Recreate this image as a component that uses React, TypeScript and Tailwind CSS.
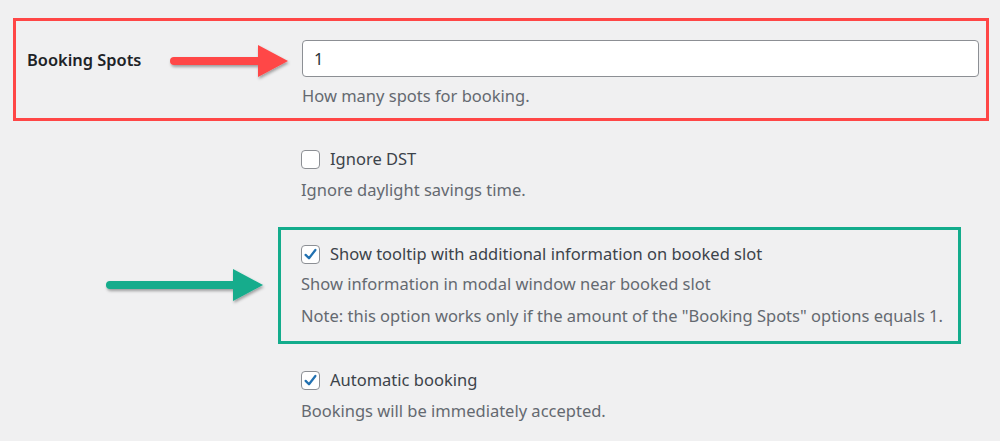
import React from 'react';

function Checkbox({ checked }: { checked?: boolean }) {
  return (
    <span className="flex h-[19px] w-[19px] shrink-0 items-center justify-center rounded-[4px] border border-[#8c8f94] bg-white">
      {checked && (
        <svg width="15" height="15" viewBox="0 0 20 20">
          <path d="M3.5 10.5 L8 15 L16.5 4" fill="none" stroke="#2271b1" strokeWidth="3" strokeLinecap="round" strokeLinejoin="round" />
        </svg>
      )}
    </span>
  );
}

function Arrow({ color, length }: { color: string; length: number }) {
  // shaft + triangular head, slight drop shadow as in the screenshot
  const head = 30;
  return (
    <svg width={length + 8} height="40" viewBox={`0 0 ${length + 8} 40`} className="overflow-visible">
      <defs>
        <filter id={`sh-${color.slice(1)}`} x="-10%" y="-30%" width="120%" height="170%">
          <feDropShadow dx="1" dy="2" stdDeviation="1.5" floodColor="#000" floodOpacity="0.35" />
        </filter>
      </defs>
      <g filter={`url(#sh-${color.slice(1)})`}>
        <line x1="4" y1="20" x2={length - head + 2} y2="20" stroke={color} strokeWidth="8" strokeLinecap="round" />
        <polygon points={`${length - head},4 ${length},20 ${length - head},36`} fill={color} />
      </g>
    </svg>
  );
}

function Option({ label, checked, children }: { label: string; checked?: boolean; children?: React.ReactNode }) {
  return (
    <div>
      <label className="flex items-center gap-[10px] text-[16.5px] leading-[20px] text-[#3c434a]">
        <Checkbox checked={checked} />
        <span>{label}</span>
      </label>
      {children}
    </div>
  );
}

export default function App() {
  return (
    <div
      className="relative h-[441px] w-[1000px] overflow-hidden bg-[#f0f0f1] pt-[18px]"
      style={{ fontFamily: '"Noto Sans", "Open Sans", sans-serif' }}
    >
      {/* Booking spots row, highlighted */}
      <div className="ml-[13px] flex h-[103px] w-[976px] border-[3px] border-[#ff4646]">
        <div className="w-[286px] shrink-0 pl-[11px] pt-[27px] text-[16.4px] font-semibold leading-[24px] text-[#1d2327]">
          Booking Spots
        </div>
        <div className="flex-1 pt-[19px]">
          <input
            type="text"
            defaultValue="1"
            className="h-[37px] w-[677px] rounded-[4px] border border-[#8c8f94] bg-white px-[11px] text-[16.5px] text-[#2c3338] outline-none"
          />
          <p className="mt-[9px] text-[16.5px] leading-[20px] text-[#646970]">How many spots for booking.</p>
        </div>
      </div>

      <div className="pl-[301px] pt-[28px]">
        <Option label="Ignore DST">
          <p className="mt-[11px] text-[16.5px] leading-[20px] text-[#646970]">Ignore daylight savings time.</p>
        </Option>
      </div>

      {/* tooltip option, highlighted */}
      <div className="ml-[278px] mt-[27px] h-[117px] w-[683px] border-[3px] border-[#13ac8c] pl-[20px] pt-[14px]">
        <Option label="Show tooltip with additional information on booked slot" checked>
          <p className="mt-[10px] text-[16.5px] leading-[20px] text-[#646970]">Show information in modal window near booked slot</p>
          <p className="mt-[12px] text-[16.5px] leading-[20px] text-[#646970]">
            Note: this option works only if the amount of the "Booking Spots" options equals 1.
          </p>
        </Option>
      </div>

      <div className="pl-[301px] pt-[26px]">
        <Option label="Automatic booking" checked>
          <p className="mt-[11px] text-[16.5px] leading-[20px] text-[#646970]">Bookings will be immediately accepted.</p>
        </Option>
      </div>

      <div className="absolute left-[170px] top-[41px]">
        <Arrow color="#ff4646" length={118} />
      </div>
      <div className="absolute left-[106px] top-[265px]">
        <Arrow color="#13ac8c" length={157} />
      </div>
    </div>
  );
}
